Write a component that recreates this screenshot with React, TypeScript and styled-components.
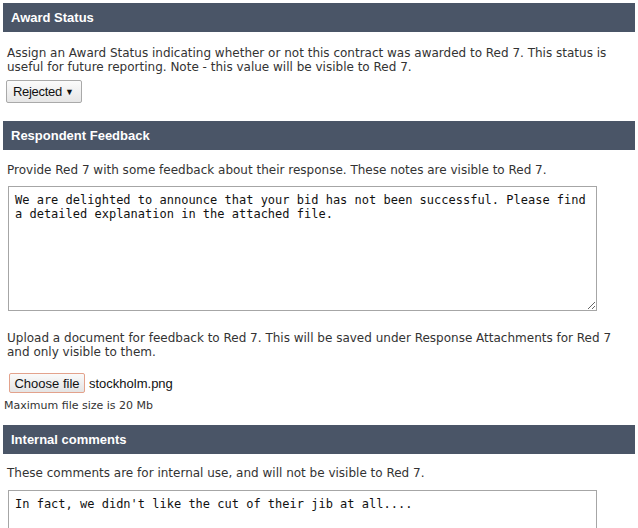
import React from "react";
import styled, { createGlobalStyle } from "styled-components";

const GlobalStyle = createGlobalStyle`
  body {
    margin: 3px;
    background: #fff;
    font-family: "DejaVu Sans", Verdana, sans-serif;
    font-size: 12px;
    color: #333;
  }
`;

const SectionHeader = styled.div`
  height: 29px;
  background: #4a5567;
  color: #fff;
  font-family: "Liberation Sans", Arial, sans-serif;
  font-weight: bold;
  font-size: 13px;
  display: flex;
  align-items: center;
  padding-left: 8px;
`;

const Body = styled.div<{ $bottom?: number }>`
  padding: 0 4px;
  padding-bottom: ${(p) => p.$bottom ?? 0}px;
`;

const Note = styled.p<{ $top: number; $bottom?: number }>`
  margin: ${(p) => p.$top}px 0 ${(p) => p.$bottom ?? 0}px;
  line-height: 14px;
`;

const SelectBox = styled.div`
  display: inline-flex;
  align-items: center;
  justify-content: space-between;
  box-sizing: border-box;
  width: 76px;
  height: 23px;
  margin-left: -1px;
  padding: 0 7px 0 6px;
  border: 1px solid #a9a9a9;
  border-radius: 2px;
  background: linear-gradient(#fbfbfb, #e6e6e6);
  font-family: "Liberation Sans", Arial, sans-serif;
  font-size: 13px;
  color: #111;
`;

const SelectLabel = styled.span`
  letter-spacing: -0.3px;
`;

const Arrow = styled.span`
  font-size: 9px;
`;

const TextBox = styled.textarea<{ $height: number }>`
  display: block;
  box-sizing: border-box;
  width: 589px;
  height: ${(p) => p.$height}px;
  margin-left: 1px;
  padding: 6px 6px 5px;
  border: 1px solid #a6a6a6;
  font-family: "DejaVu Sans Mono", monospace;
  font-size: 12px;
  line-height: 14px;
  color: #111;
  resize: vertical;
  outline: none;
`;

const FileRow = styled.div`
  display: flex;
  align-items: center;
  gap: 4px;
  margin-top: 14px;
  margin-left: 2px;
  font-family: "Liberation Sans", Arial, sans-serif;
  font-size: 13px;
  color: #111;
`;

const FileButton = styled.button`
  box-sizing: border-box;
  width: 76px;
  height: 20px;
  padding: 0;
  border: 1px solid #e3a28c;
  border-radius: 2px;
  background: linear-gradient(#fafafa, #e4e4e4);
  font-family: "Liberation Sans", Arial, sans-serif;
  font-size: 13px;
  color: #111;
`;

const SmallNote = styled.div`
  margin: 6px 0 13px -3px;
  font-size: 11px;
  line-height: 13px;
`;

export default function App() {
  return (
    <>
      <GlobalStyle />
      <SectionHeader>Award Status</SectionHeader>
      <Body $bottom={18}>
        <Note $top={14} $bottom={6}>
          Assign an Award Status indicating whether or not this contract was awarded to Red 7. This status is
          useful for future reporting. Note - this value will be visible to Red 7.
        </Note>
        <SelectBox>
          <SelectLabel>Rejected</SelectLabel>
          <Arrow>▼</Arrow>
        </SelectBox>
      </Body>

      <SectionHeader>Respondent Feedback</SectionHeader>
      <Body>
        <Note $top={13} $bottom={9}>
          Provide Red 7 with some feedback about their response. These notes are visible to Red 7.
        </Note>
        <TextBox
          $height={125}
          defaultValue="We are delighted to announce that your bid has not been successful. Please find a detailed explanation in the attached file."
        />
        <Note $top={20}>
          Upload a document for feedback to Red 7. This will be saved under Response Attachments for Red 7
          and only visible to them.
        </Note>
        <FileRow>
          <FileButton>Choose file</FileButton>
          <span>stockholm.png</span>
        </FileRow>
        <SmallNote>Maximum file size is 20 Mb</SmallNote>
      </Body>

      <SectionHeader>Internal comments</SectionHeader>
      <Body>
        <Note $top={12} $bottom={10}>
          These comments are for internal use, and will not be visible to Red 7.
        </Note>
        <TextBox $height={125} defaultValue="In fact, we didn't like the cut of their jib at all...." />
      </Body>
    </>
  );
}
